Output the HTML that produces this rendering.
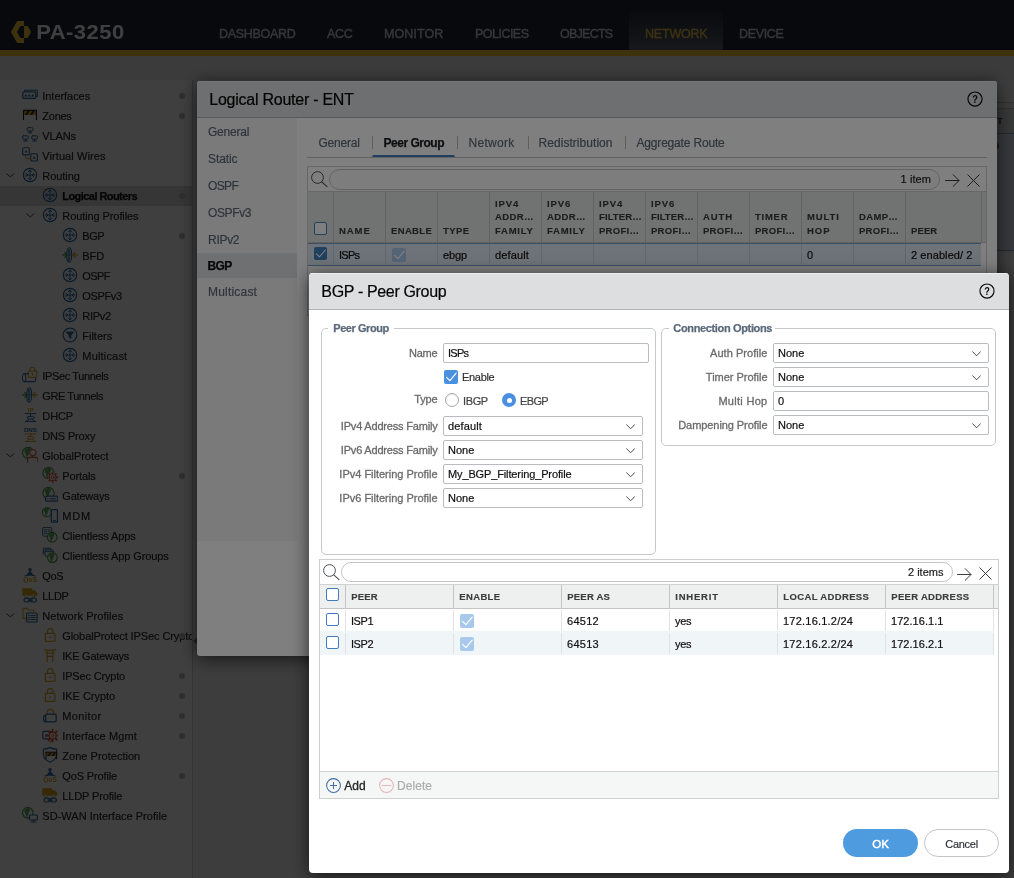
<!DOCTYPE html><html lang="en"><head><meta charset="utf-8"><title>PA-3250</title><style>
*{box-sizing:border-box;margin:0;padding:0}
html,body{width:1014px;height:878px;overflow:hidden;background:#f6f6f6}
body{font-family:"Liberation Sans",sans-serif;font-size:11px;color:#222;position:relative}
.abs,.abs>*{position:absolute}
#page{will-change:transform;position:absolute;left:0;top:0;width:1014px;height:878px;overflow:hidden}
.box{position:absolute}
.mask{position:absolute;left:0;top:0;width:1014px;height:878px;background:rgba(0,0,0,.5)}
svg{display:block}
.ico{position:absolute;width:16px;height:16px}
.dot{position:absolute;width:6px;height:6px;border-radius:50%;background:#b8b8b8}
.cb{position:absolute;width:13px;height:13px;border:1.5px solid #3f7cc0;border-radius:2px;background:#fff}
.inp{position:absolute;height:20px;border:1px solid #b8bcc1;border-radius:2px;background:#fff}
.fs{position:absolute;border:1px solid #c6c9cc;border-radius:5px}
.colsep{position:absolute;width:1px;background:#c9c9c9}
</style></head><body><div id="page"><div class="box" style="left:0px;top:0px;width:1014px;height:50px;background:#1c2434"></div><div class="box" style="left:629px;top:0px;width:94px;height:50px;background:linear-gradient(#1c2434 15%,#5c616c 100%)"></div><div class="box" style="left:0px;top:50px;width:1014px;height:6px;background:#f5c832"></div><div class="box" style="left:0px;top:56px;width:1014px;height:24px;background:#ececec"></div><svg class="box" style="left:0;top:0" width="40" height="50" viewBox="0 0 40 50"><path d="M17.160 21H24.060V25.960H20.350L16.960 31.950 20.350 38.050H24.060V42.900H17.160L10.900 31.950z" fill="#f8c838"/><path d="M24.060 25.960H27.730L31.120 31.950 27.730 38.050H24.060z" fill="#f8c838"/></svg><span style="position:absolute;white-space:nowrap;left:36.2px;top:17px;font-size:22px;line-height:31px;letter-spacing:0.47px;color:#fff;font-weight:bold;transform:scaleY(.885);transform-origin:0 50%;">PA-3250</span><span style="position:absolute;white-space:nowrap;left:219px;top:25px;font-size:12.5px;line-height:18px;letter-spacing:-0.3px;color:#d6dae2;-webkit-text-stroke:0.35px;">DASHBOARD</span><span style="position:absolute;white-space:nowrap;left:327px;top:25px;font-size:12.5px;line-height:18px;letter-spacing:-0.3px;color:#d6dae2;-webkit-text-stroke:0.35px;">ACC</span><span style="position:absolute;white-space:nowrap;left:384px;top:25px;font-size:12.5px;line-height:18px;letter-spacing:0.1px;color:#d6dae2;-webkit-text-stroke:0.35px;">MONITOR</span><span style="position:absolute;white-space:nowrap;left:475px;top:25px;font-size:12.5px;line-height:18px;letter-spacing:-0.52px;color:#d6dae2;-webkit-text-stroke:0.35px;">POLICIES</span><span style="position:absolute;white-space:nowrap;left:560px;top:25px;font-size:12.5px;line-height:18px;letter-spacing:-0.74px;color:#d6dae2;-webkit-text-stroke:0.35px;">OBJECTS</span><span style="position:absolute;white-space:nowrap;left:645px;top:25px;font-size:12.5px;line-height:18px;letter-spacing:-0.2px;color:#f0c846;-webkit-text-stroke:0.35px;">NETWORK</span><span style="position:absolute;white-space:nowrap;left:739px;top:25px;font-size:12.5px;line-height:18px;letter-spacing:-0.34px;color:#d6dae2;-webkit-text-stroke:0.35px;">DEVICE</span><div class="box" style="left:0px;top:80px;width:193px;height:798px;background:#fff;border-right:1px solid #cdcdcd;overflow:hidden"><div class="ico" style="left:22px;top:7.3px"><svg width="16" height="16" viewBox="0 0 16 16" fill="none" stroke-linecap="round" stroke-linejoin="round"><path d="M2.5 4.5V3.2h12.8v6.3h-1.2" stroke="#2b6ca3" stroke-width="1"/><rect x="0.8" y="4.8" width="13" height="6.6" rx="1.3" stroke="#2b6ca3" stroke-width="1.2"/><path d="M2.6 9.6h2.6V8.4H4.6V7.6H3.2v.8H2.6zM6 9.6h2.6V8.4H8V7.6H6.6v.8H6zM9.4 9.6H12V8.4h-.6V7.6H10v.8h-.6z" fill="#2b6ca3"/></svg></div><span style="position:absolute;white-space:nowrap;left:42.3px;top:9px;font-size:11px;line-height:15px;letter-spacing:-0.05px;color:#2a2a2a;-webkit-text-stroke:0.2px;">Interfaces</span><div class="dot" style="left:179px;top:13px"></div><div class="ico" style="left:22px;top:27.3px"><svg width="16" height="16" viewBox="0 0 16 16" fill="none" stroke-linecap="round" stroke-linejoin="round"><rect x="1.5" y="3.6" width="13" height="4.4" fill="#d9a520"/><path d="M3 8l3-4.4h2L5 8zM8 8l3-4.4h2L10 8z" fill="#222"/><path d="M1.5 3.4v9.2M14.5 3.4v9.2M1.5 3.4h13" stroke="#222" stroke-width="1.1"/></svg></div><span style="position:absolute;white-space:nowrap;left:42.3px;top:29px;font-size:11px;line-height:15px;letter-spacing:-0.25px;color:#2a2a2a;-webkit-text-stroke:0.2px;">Zones</span><div class="dot" style="left:179px;top:33px"></div><div class="ico" style="left:22px;top:47.3px"><svg width="16" height="16" viewBox="0 0 16 16" fill="none" stroke-linecap="round" stroke-linejoin="round"><rect x="5.2" y="0.6" width="5.6" height="3.4" rx="1" stroke="#2b6ca3" stroke-width="1"/><path d="M8.0 4.0v1.6M6.2 5.8h3.6" stroke="#2b6ca3" stroke-width="1"/><rect x="0.6" y="8.8" width="5.6" height="3.4" rx="1" stroke="#2b6ca3" stroke-width="1"/><path d="M3.4 12.200000000000001v1.6M1.6 14.0h3.6" stroke="#2b6ca3" stroke-width="1"/><rect x="9.8" y="8.8" width="5.6" height="3.4" rx="1" stroke="#2b6ca3" stroke-width="1"/><path d="M12.600000000000001 12.200000000000001v1.6M10.8 14.0h3.6" stroke="#2b6ca3" stroke-width="1"/></svg></div><span style="position:absolute;white-space:nowrap;left:42.3px;top:49px;font-size:11px;line-height:15px;letter-spacing:-0.14px;color:#2a2a2a;-webkit-text-stroke:0.2px;">VLANs</span><div class="ico" style="left:22px;top:67.3px"><svg width="16" height="16" viewBox="0 0 16 16" fill="none" stroke-linecap="round" stroke-linejoin="round"><rect x="0.7" y="0.7" width="6.6" height="7.2" rx="1" stroke="#2b6ca3" stroke-width="1.1"/><rect x="8.8" y="6.8" width="6.6" height="7.2" rx="1" stroke="#2b6ca3" stroke-width="1.1"/><path d="M2.8 5.6h2.4V4.4h-.6v-.8H3.4v.8h-.6zM10.9 11.7h2.4v-1.2h-.6v-.8h-1.2v.8h-.6z" fill="#2b6ca3"/><path d="M3.6 8.2v1.6q0 1.8 1.8 1.8h3" stroke="#d9a520" stroke-width="1.1"/></svg></div><span style="position:absolute;white-space:nowrap;left:42.3px;top:69px;font-size:11px;line-height:15px;letter-spacing:0.08px;color:#2a2a2a;-webkit-text-stroke:0.2px;">Virtual Wires</span><div class="ico" style="left:22px;top:87.3px"><svg width="16" height="16" viewBox="0 0 16 16" fill="none" stroke-linecap="round" stroke-linejoin="round"><circle cx="8" cy="8" r="6.700" stroke="#2b6ca3" stroke-width="1.150"/><path d="M8 3v10M3 8h10" stroke="#2b6ca3" stroke-width="1"/><path d="M6.4 4.8L8 3l1.6 1.8M6.4 11.2L8 13l1.6-1.8M4.2 6.4L6 8 4.2 9.6M11.8 6.4L10 8l1.8 1.6" stroke="#2b6ca3" stroke-width="1"/></svg></div><span style="position:absolute;white-space:nowrap;left:42.3px;top:89px;font-size:11px;line-height:15px;letter-spacing:-0.05px;color:#2a2a2a;-webkit-text-stroke:0.2px;">Routing</span><div class="box" style="left:6.2px;top:93.3px"><svg width="8.6" height="4.8" viewBox="0 0 8.6 4.8" fill="none"><path d="M0.600 0.700L4.3 4l3.7-3.3" stroke="#333" stroke-width="0.9" stroke-linecap="round" stroke-linejoin="round"/></svg></div><div class="box" style="left:0px;top:106px;width:193px;height:20px;background:#d9d9d9"></div><div class="ico" style="left:42px;top:107.3px"><svg width="16" height="16" viewBox="0 0 16 16" fill="none" stroke-linecap="round" stroke-linejoin="round"><circle cx="8" cy="8" r="6.700" stroke="#2b6ca3" stroke-width="1.150"/><path d="M8 3v10M3 8h10" stroke="#2b6ca3" stroke-width="1"/><path d="M6.4 4.8L8 3l1.6 1.8M6.4 11.2L8 13l1.6-1.8M4.2 6.4L6 8 4.2 9.6M11.8 6.4L10 8l1.8 1.6" stroke="#2b6ca3" stroke-width="1"/></svg></div><span style="position:absolute;white-space:nowrap;left:62.3px;top:109px;font-size:11px;line-height:15px;letter-spacing:-0.56px;color:#111;font-weight:bold;-webkit-text-stroke:0.25px;">Logical Routers</span><div class="dot" style="left:179px;top:113px"></div><div class="ico" style="left:42px;top:127.3px"><svg width="16" height="16" viewBox="0 0 16 16" fill="none" stroke-linecap="round" stroke-linejoin="round"><circle cx="8" cy="8" r="6.700" stroke="#2b6ca3" stroke-width="1.150"/><path d="M8 3v10M3 8h10" stroke="#2b6ca3" stroke-width="1"/><path d="M6.4 4.8L8 3l1.6 1.8M6.4 11.2L8 13l1.6-1.8M4.2 6.4L6 8 4.2 9.6M11.8 6.4L10 8l1.8 1.6" stroke="#2b6ca3" stroke-width="1"/></svg></div><span style="position:absolute;white-space:nowrap;left:62.3px;top:129px;font-size:11px;line-height:15px;letter-spacing:-0.09px;color:#2a2a2a;-webkit-text-stroke:0.2px;">Routing Profiles</span><div class="box" style="left:26.2px;top:133.3px"><svg width="8.6" height="4.8" viewBox="0 0 8.6 4.8" fill="none"><path d="M0.600 0.700L4.3 4l3.7-3.3" stroke="#333" stroke-width="0.9" stroke-linecap="round" stroke-linejoin="round"/></svg></div><div class="ico" style="left:62px;top:147.3px"><svg width="16" height="16" viewBox="0 0 16 16" fill="none" stroke-linecap="round" stroke-linejoin="round"><circle cx="8" cy="8" r="6.700" stroke="#2b6ca3" stroke-width="1.150"/><path d="M8 3v10M3 8h10" stroke="#2b6ca3" stroke-width="1"/><path d="M6.4 4.8L8 3l1.6 1.8M6.4 11.2L8 13l1.6-1.8M4.2 6.4L6 8 4.2 9.6M11.8 6.4L10 8l1.8 1.6" stroke="#2b6ca3" stroke-width="1"/></svg></div><span style="position:absolute;white-space:nowrap;left:82.3px;top:149px;font-size:11px;line-height:15px;letter-spacing:-0.49px;color:#2a2a2a;-webkit-text-stroke:0.2px;">BGP</span><div class="dot" style="left:179px;top:153px"></div><div class="ico" style="left:62px;top:167.3px"><svg width="16" height="16" viewBox="0 0 16 16" fill="none" stroke-linecap="round" stroke-linejoin="round"><ellipse cx="7.200" cy="7.900" rx="2.500" ry="7.200" stroke="#2b6ca3" stroke-width="1.100"/><ellipse cx="7" cy="7.900" rx="0.900" ry="5.600" stroke="#2b6ca3" stroke-width="0.900"/><path d="M0.300 7.900h4.600M2.800 5.400l2.300 2.500-2.300 2.500" stroke="#3c9a3c" stroke-width="1.100"/><path d="M15.700 7.900h-4.600M13.200 5.400l-2.300 2.500 2.300 2.500" stroke="#d9a520" stroke-width="1.100"/></svg></div><span style="position:absolute;white-space:nowrap;left:82.3px;top:169px;font-size:11px;line-height:15px;letter-spacing:-0.1px;color:#2a2a2a;-webkit-text-stroke:0.2px;">BFD</span><div class="ico" style="left:62px;top:187.3px"><svg width="16" height="16" viewBox="0 0 16 16" fill="none" stroke-linecap="round" stroke-linejoin="round"><circle cx="8" cy="8" r="6.700" stroke="#2b6ca3" stroke-width="1.150"/><path d="M8 3v10M3 8h10" stroke="#2b6ca3" stroke-width="1"/><path d="M6.4 4.8L8 3l1.6 1.8M6.4 11.2L8 13l1.6-1.8M4.2 6.4L6 8 4.2 9.6M11.8 6.4L10 8l1.8 1.6" stroke="#2b6ca3" stroke-width="1"/></svg></div><span style="position:absolute;white-space:nowrap;left:82.3px;top:189px;font-size:11px;line-height:15px;letter-spacing:-0.59px;color:#2a2a2a;-webkit-text-stroke:0.2px;">OSPF</span><div class="ico" style="left:62px;top:207.3px"><svg width="16" height="16" viewBox="0 0 16 16" fill="none" stroke-linecap="round" stroke-linejoin="round"><circle cx="8" cy="8" r="6.700" stroke="#2b6ca3" stroke-width="1.150"/><path d="M8 3v10M3 8h10" stroke="#2b6ca3" stroke-width="1"/><path d="M6.4 4.8L8 3l1.6 1.8M6.4 11.2L8 13l1.6-1.8M4.2 6.4L6 8 4.2 9.6M11.8 6.4L10 8l1.8 1.6" stroke="#2b6ca3" stroke-width="1"/></svg></div><span style="position:absolute;white-space:nowrap;left:82.3px;top:209px;font-size:11px;line-height:15px;letter-spacing:-0.35px;color:#2a2a2a;-webkit-text-stroke:0.2px;">OSPFv3</span><div class="ico" style="left:62px;top:227.3px"><svg width="16" height="16" viewBox="0 0 16 16" fill="none" stroke-linecap="round" stroke-linejoin="round"><circle cx="8" cy="8" r="6.700" stroke="#2b6ca3" stroke-width="1.150"/><path d="M8 3v10M3 8h10" stroke="#2b6ca3" stroke-width="1"/><path d="M6.4 4.8L8 3l1.6 1.8M6.4 11.2L8 13l1.6-1.8M4.2 6.4L6 8 4.2 9.6M11.8 6.4L10 8l1.8 1.6" stroke="#2b6ca3" stroke-width="1"/></svg></div><span style="position:absolute;white-space:nowrap;left:82.3px;top:229px;font-size:11px;line-height:15px;letter-spacing:-0.26px;color:#2a2a2a;-webkit-text-stroke:0.2px;">RIPv2</span><div class="ico" style="left:62px;top:247.3px"><svg width="16" height="16" viewBox="0 0 16 16" fill="none" stroke-linecap="round" stroke-linejoin="round"><circle cx="8" cy="8" r="6.9" stroke="#2b6ca3" stroke-width="1.2"/><path d="M4.4 5h7.2L9 8.4v3L7 10.4v-2z" fill="#2b6ca3" stroke="#2b6ca3" stroke-width="0.8"/></svg></div><span style="position:absolute;white-space:nowrap;left:82.3px;top:249px;font-size:11px;line-height:15px;letter-spacing:-0.01px;color:#2a2a2a;-webkit-text-stroke:0.2px;">Filters</span><div class="ico" style="left:62px;top:267.3px"><svg width="16" height="16" viewBox="0 0 16 16" fill="none" stroke-linecap="round" stroke-linejoin="round"><circle cx="8" cy="8" r="6.700" stroke="#2b6ca3" stroke-width="1.150"/><path d="M8 3v10M3 8h10" stroke="#2b6ca3" stroke-width="1"/><path d="M6.4 4.8L8 3l1.6 1.8M6.4 11.2L8 13l1.6-1.8M4.2 6.4L6 8 4.2 9.6M11.8 6.4L10 8l1.8 1.6" stroke="#2b6ca3" stroke-width="1"/></svg></div><span style="position:absolute;white-space:nowrap;left:82.3px;top:269px;font-size:11px;line-height:15px;letter-spacing:0.18px;color:#2a2a2a;-webkit-text-stroke:0.2px;">Multicast</span><div class="ico" style="left:22px;top:287.3px"><svg width="16" height="16" viewBox="0 0 16 16" fill="none" stroke-linecap="round" stroke-linejoin="round"><rect x="6.400" y="4" width="8.400" height="6.400" rx="0.900" stroke="#d9a520" stroke-width="1.100"/><path d="M7.900 4V2.800a2.500 2.500 0 015 0V4" stroke="#d9a520" stroke-width="1.100"/><circle cx="10.500" cy="6.600" r="0.900" fill="#d9a520"/><path d="M10.500 6.800v1.600" stroke="#d9a520" stroke-width="0.900"/><ellipse cx="2.100" cy="10.700" rx="1.700" ry="3.900" stroke="#2b6ca3" stroke-width="1.050"/><path d="M2.100 6.800h4.200M2.100 14.600h10q1.600 0 1.600-1.800v-2.200" stroke="#2b6ca3" stroke-width="1.050"/></svg></div><span style="position:absolute;white-space:nowrap;left:42.3px;top:289px;font-size:11px;line-height:15px;letter-spacing:-0.37px;color:#2a2a2a;-webkit-text-stroke:0.2px;">IPSec Tunnels</span><div class="ico" style="left:22px;top:307.3px"><svg width="16" height="16" viewBox="0 0 16 16" fill="none" stroke-linecap="round" stroke-linejoin="round"><ellipse cx="7.200" cy="7.900" rx="2.500" ry="7.200" stroke="#2b6ca3" stroke-width="1.100"/><ellipse cx="7" cy="7.900" rx="0.900" ry="5.600" stroke="#2b6ca3" stroke-width="0.900"/><path d="M0.300 7.900h4.600M2.800 5.400l2.300 2.500-2.300 2.500" stroke="#3c9a3c" stroke-width="1.100"/><path d="M15.700 7.900h-4.600M13.200 5.400l-2.300 2.500 2.300 2.500" stroke="#d9a520" stroke-width="1.100"/></svg></div><span style="position:absolute;white-space:nowrap;left:42.3px;top:309px;font-size:11px;line-height:15px;letter-spacing:-0.43px;color:#2a2a2a;-webkit-text-stroke:0.2px;">GRE Tunnels</span><div class="ico" style="left:22px;top:327.3px"><svg width="16" height="16" viewBox="0 0 16 16" fill="none" stroke-linecap="round" stroke-linejoin="round"><text x="8.700" y="5" font-family="Liberation Sans, sans-serif" font-size="6.200" font-weight="bold" fill="#d9a520" text-anchor="middle">IP</text><path d="M3.200 6.600h10.600M8.500 6.600v2.800M3.200 14.400h10.600M6.800 12.100q-.4 2.200-2.600 2.300M10.400 12.100q.4 2.200 2.600 2.300" stroke="#2b6ca3" stroke-width="1"/><rect x="5.300" y="9.400" width="6.800" height="2.700" rx="1.350" stroke="#2b6ca3" stroke-width="1"/></svg></div><span style="position:absolute;white-space:nowrap;left:42.3px;top:329px;font-size:11px;line-height:15px;letter-spacing:-0.11px;color:#2a2a2a;-webkit-text-stroke:0.2px;">DHCP</span><div class="ico" style="left:22px;top:347.3px"><svg width="16" height="16" viewBox="0 0 16 16" fill="none" stroke-linecap="round" stroke-linejoin="round"><text x="8.400" y="5.200" font-family="Liberation Sans, sans-serif" font-size="6" font-weight="bold" fill="#2b6ca3" text-anchor="middle" textLength="13" lengthAdjust="spacingAndGlyphs">DNS</text><path d="M3.200 6.900h10.600M8.500 6.900v2.500M3.200 14.500h10.600M6.800 12.100q-.4 2.200-2.600 2.400M10.400 12.100q.4 2.200 2.600 2.400" stroke="#d9a520" stroke-width="1"/><rect x="5.300" y="9.400" width="6.800" height="2.700" rx="1.350" stroke="#d9a520" stroke-width="1"/></svg></div><span style="position:absolute;white-space:nowrap;left:42.3px;top:349px;font-size:11px;line-height:15px;letter-spacing:-0.16px;color:#2a2a2a;-webkit-text-stroke:0.2px;">DNS Proxy</span><div class="ico" style="left:22px;top:367.3px"><svg width="16" height="16" viewBox="0 0 16 16" fill="none" stroke-linecap="round" stroke-linejoin="round"><circle cx="6.1" cy="5.9" r="5.5" stroke="#3c9a3c" stroke-width="1.100"/><path d="M2.69 2.875q2.475 -2.75 5.225 -1.65q1.65 1.925 -0.275 3.3q-1.1 0.55 -0.55 2.475q-1.375 1.65 -1.925 4.125q-1.65 -2.75 -1.65 -4.95q-1.65 -1.1 -0.825 -3.3z" fill="#3c9a3c" fill-opacity=".8"/><circle cx="10.900" cy="5.600" r="3.100" stroke="#d9573b" stroke-width="1.100" fill="#fff"/><path d="M5.600 15.300v-2.600q0-2.300 2.400-2.300h5.600q2.400 0 2.400 2.300v2.600" stroke="#d9573b" stroke-width="1.100" fill="#fff"/></svg></div><span style="position:absolute;white-space:nowrap;left:42.3px;top:369px;font-size:11px;line-height:15px;letter-spacing:-0.03px;color:#2a2a2a;-webkit-text-stroke:0.2px;">GlobalProtect</span><div class="box" style="left:6.2px;top:373.3px"><svg width="8.6" height="4.8" viewBox="0 0 8.6 4.8" fill="none"><path d="M0.600 0.700L4.3 4l3.7-3.3" stroke="#333" stroke-width="0.9" stroke-linecap="round" stroke-linejoin="round"/></svg></div><div class="ico" style="left:42px;top:387.3px"><svg width="16" height="16" viewBox="0 0 16 16" fill="none" stroke-linecap="round" stroke-linejoin="round"><circle cx="6.5" cy="6.1" r="5.6" stroke="#3c9a3c" stroke-width="1.100"/><path d="M3.028 3.02q2.52 -2.8 5.32 -1.68q1.68 1.96 -0.28 3.36q-1.12 0.56 -0.56 2.52q-1.4 1.68 -1.96 4.2q-1.68 -2.8 -1.68 -5.04q-1.68 -1.12 -0.84 -3.36z" fill="#3c9a3c" fill-opacity=".8"/><circle cx="10.600" cy="10.300" r="5.200" fill="#fff"/><path d="M10.600 4.800v1.500" stroke="#d9573b" stroke-width="1.700" stroke-linecap="butt" transform="rotate(0 10.600 10.300)"/><path d="M10.600 4.800v1.500" stroke="#d9573b" stroke-width="1.700" stroke-linecap="butt" transform="rotate(45 10.600 10.300)"/><path d="M10.600 4.800v1.500" stroke="#d9573b" stroke-width="1.700" stroke-linecap="butt" transform="rotate(90 10.600 10.300)"/><path d="M10.600 4.800v1.500" stroke="#d9573b" stroke-width="1.700" stroke-linecap="butt" transform="rotate(135 10.600 10.300)"/><path d="M10.600 4.800v1.500" stroke="#d9573b" stroke-width="1.700" stroke-linecap="butt" transform="rotate(180 10.600 10.300)"/><path d="M10.600 4.800v1.500" stroke="#d9573b" stroke-width="1.700" stroke-linecap="butt" transform="rotate(225 10.600 10.300)"/><path d="M10.600 4.800v1.500" stroke="#d9573b" stroke-width="1.700" stroke-linecap="butt" transform="rotate(270 10.600 10.300)"/><path d="M10.600 4.800v1.500" stroke="#d9573b" stroke-width="1.700" stroke-linecap="butt" transform="rotate(315 10.600 10.300)"/><circle cx="10.600" cy="10.300" r="3.500" stroke="#d9573b" stroke-width="1.100" fill="#fff"/><circle cx="10.600" cy="10.300" r="1.500" stroke="#d9573b" stroke-width="1"/></svg></div><span style="position:absolute;white-space:nowrap;left:62.3px;top:389px;font-size:11px;line-height:15px;letter-spacing:-0.13px;color:#2a2a2a;-webkit-text-stroke:0.2px;">Portals</span><div class="dot" style="left:179px;top:393px"></div><div class="ico" style="left:42px;top:407.3px"><svg width="16" height="16" viewBox="0 0 16 16" fill="none" stroke-linecap="round" stroke-linejoin="round"><circle cx="6.5" cy="6.1" r="5.6" stroke="#3c9a3c" stroke-width="1.100"/><path d="M3.028 3.02q2.52 -2.8 5.32 -1.68q1.68 1.96 -0.28 3.36q-1.12 0.56 -0.56 2.52q-1.4 1.68 -1.96 4.2q-1.68 -2.8 -1.68 -5.04q-1.68 -1.12 -0.84 -3.36z" fill="#3c9a3c" fill-opacity=".8"/><rect x="3.600" y="9.200" width="12.200" height="5" rx="1.200" stroke="#2b6ca3" stroke-width="1.200" fill="#fff"/><path d="M8 11.700h5.600" stroke="#2b6ca3" stroke-width="1.100"/><circle cx="5.900" cy="11.700" r="0.700" fill="#2b6ca3"/></svg></div><span style="position:absolute;white-space:nowrap;left:62.3px;top:409px;font-size:11px;line-height:15px;letter-spacing:-0.2px;color:#2a2a2a;-webkit-text-stroke:0.2px;">Gateways</span><div class="ico" style="left:42px;top:427.3px"><svg width="16" height="16" viewBox="0 0 16 16" fill="none" stroke-linecap="round" stroke-linejoin="round"><circle cx="5" cy="5.2" r="4.6" stroke="#3c9a3c" stroke-width="1.100"/><path d="M2.148 2.67q2.07 -2.3 4.37 -1.38q1.38 1.61 -0.23 2.76q-0.92 0.46 -0.46 2.07q-1.15 1.38 -1.61 3.45q-1.38 -2.3 -1.38 -4.14q-1.38 -0.92 -0.69 -2.76z" fill="#3c9a3c" fill-opacity=".8"/><rect x="9.300" y="2.600" width="6.200" height="12.600" rx="1.200" stroke="#2b6ca3" stroke-width="1.300" fill="#fff"/><path d="M11.400 13.500h2" stroke="#2b6ca3" stroke-width="0.900"/></svg></div><span style="position:absolute;white-space:nowrap;left:62.3px;top:429px;font-size:11px;line-height:15px;letter-spacing:0.84px;color:#2a2a2a;-webkit-text-stroke:0.2px;">MDM</span><div class="ico" style="left:42px;top:447.3px"><svg width="16" height="16" viewBox="0 0 16 16" fill="none" stroke-linecap="round" stroke-linejoin="round"><rect x="0.600" y="0.600" width="9.200" height="8.600" rx=".8" stroke="#2b6ca3" stroke-width="1"/><path d="M2.200 2.900h2.400M5.800 2.900h2.400M2.200 4.800h2.400M5.800 4.800h2.400M2.200 6.700h2.400M5.800 6.700h2.400" stroke="#2b6ca3" stroke-width=".9"/><circle cx="10.200" cy="10.200" r="5.300" fill="#fff"/><circle cx="10.2" cy="10.2" r="4.8" stroke="#3c9a3c" stroke-width="1.100"/><path d="M7.224 7.56q2.16 -2.4 4.56 -1.44q1.44 1.68 -0.24 2.88q-0.96 0.48 -0.48 2.16q-1.2 1.44 -1.68 3.6q-1.44 -2.4 -1.44 -4.32q-1.44 -0.96 -0.72 -2.88z" fill="#3c9a3c" fill-opacity=".8"/></svg></div><span style="position:absolute;white-space:nowrap;left:62.3px;top:449px;font-size:11px;line-height:15px;letter-spacing:-0.13px;color:#2a2a2a;-webkit-text-stroke:0.2px;">Clientless Apps</span><div class="ico" style="left:42px;top:467.3px"><svg width="16" height="16" viewBox="0 0 16 16" fill="none" stroke-linecap="round" stroke-linejoin="round"><path d="M1.300 7V1.200h7.400v1.600" stroke="#2b6ca3" stroke-width="1"/><rect x="3" y="2.800" width="8.200" height="6.400" rx=".8" stroke="#2b6ca3" stroke-width="1"/><path d="M3 4.600h8.200" stroke="#2b6ca3" stroke-width=".9"/><circle cx="10.400" cy="10.600" r="5.300" fill="#fff"/><circle cx="10.4" cy="10.6" r="4.8" stroke="#3c9a3c" stroke-width="1.100"/><path d="M7.424 7.96q2.16 -2.4 4.56 -1.44q1.44 1.68 -0.24 2.88q-0.96 0.48 -0.48 2.16q-1.2 1.44 -1.68 3.6q-1.44 -2.4 -1.44 -4.32q-1.44 -0.96 -0.72 -2.88z" fill="#3c9a3c" fill-opacity=".8"/></svg></div><span style="position:absolute;white-space:nowrap;left:62.3px;top:469px;font-size:11px;line-height:15px;letter-spacing:-0.12px;color:#2a2a2a;-webkit-text-stroke:0.2px;">Clientless App Groups</span><div class="ico" style="left:22px;top:487.3px"><svg width="16" height="16" viewBox="0 0 16 16" fill="none" stroke-linecap="round" stroke-linejoin="round"><circle cx="8" cy="2.6" r="1.7" fill="#2b6ca3"/><path d="M8 3.6L4.2 8.6h7.6z" fill="#2b6ca3"/><path d="M3 8.8q5-2.4 10 0" stroke="#2b6ca3" stroke-width="1"/><text x="8" y="15.2" font-family="Liberation Sans, sans-serif" font-size="6.6" font-weight="bold" fill="#d9a520" text-anchor="middle">QoS</text></svg></div><span style="position:absolute;white-space:nowrap;left:42.3px;top:489px;font-size:11px;line-height:15px;letter-spacing:-0.41px;color:#2a2a2a;-webkit-text-stroke:0.2px;">QoS</span><div class="ico" style="left:22px;top:507.3px"><svg width="16" height="16" viewBox="0 0 16 16" fill="none" stroke-linecap="round" stroke-linejoin="round"><path d="M1 1.6h8.4v6.6H1zM9.4 3.4h3l2.6 2.6v2.2H9.4z" fill="#d9a520" stroke="#d9a520" stroke-width=".8"/><circle cx="4" cy="8.6" r="1.5" fill="#fff" stroke="#d9a520" stroke-width="1"/><circle cx="11.6" cy="8.6" r="1.5" fill="#fff" stroke="#d9a520" stroke-width="1"/><rect x="2" y="11.2" width="6" height="3.8" rx="1.9" stroke="#2b6ca3" stroke-width="1.2"/><rect x="8.4" y="11.2" width="6" height="3.8" rx="1.9" stroke="#2b6ca3" stroke-width="1.2"/><path d="M6 13.1h4.4" stroke="#2b6ca3" stroke-width="1.2"/></svg></div><span style="position:absolute;white-space:nowrap;left:42.3px;top:509px;font-size:11px;line-height:15px;letter-spacing:-0.31px;color:#2a2a2a;-webkit-text-stroke:0.2px;">LLDP</span><div class="ico" style="left:22px;top:527.3px"><svg width="16" height="16" viewBox="0 0 16 16" fill="none" stroke-linecap="round" stroke-linejoin="round"><path d="M3.4 11.4H1V1.4h4l1.2 1.6h5.4v2" stroke="#d9a520" stroke-width="1.1"/><rect x="4.6" y="6" width="10.4" height="9" rx="1" stroke="#2b6ca3" stroke-width="1.2" fill="#fff"/><path d="M6.4 8.6h1M8.8 8.6h4.4M6.4 10.6h1M8.8 10.6h4.4M6.4 12.6h1M8.8 12.6h4.4" stroke="#2b6ca3" stroke-width="1"/></svg></div><span style="position:absolute;white-space:nowrap;left:42.3px;top:529px;font-size:11px;line-height:15px;letter-spacing:0.06px;color:#2a2a2a;-webkit-text-stroke:0.2px;">Network Profiles</span><div class="box" style="left:6.2px;top:533.3px"><svg width="8.6" height="4.8" viewBox="0 0 8.6 4.8" fill="none"><path d="M0.600 0.700L4.3 4l3.7-3.3" stroke="#333" stroke-width="0.9" stroke-linecap="round" stroke-linejoin="round"/></svg></div><div class="ico" style="left:42px;top:547.3px"><svg width="16" height="16" viewBox="0 0 16 16" fill="none" stroke-linecap="round" stroke-linejoin="round"><rect x="3.4" y="6.4" width="9.6" height="8" rx="1" stroke="#d9a520" stroke-width="1.2"/><path d="M5.4 6.4V4.4a2.8 2.8 0 015.6 0v2" stroke="#d9a520" stroke-width="1.2"/><circle cx="8.2" cy="10.2" r="1" fill="#d9a520"/></svg></div><span style="position:absolute;white-space:nowrap;left:62.3px;top:549px;font-size:11px;line-height:15px;letter-spacing:-0.1px;color:#2a2a2a;-webkit-text-stroke:0.2px;">GlobalProtect IPSec Crypto</span><div class="dot" style="left:179px;top:553px"></div><div class="ico" style="left:42px;top:567.3px"><svg width="16" height="16" viewBox="0 0 16 16" fill="none" stroke-linecap="round" stroke-linejoin="round"><path d="M2.4 2.6q5.6 1.4 11.2 0M3.6 6h8.8M5.2 3.4v11.4M10.8 3.4v11.4M5.2 9.4h5.6" stroke="#d9a520" stroke-width="1.2"/></svg></div><span style="position:absolute;white-space:nowrap;left:62.3px;top:569px;font-size:11px;line-height:15px;letter-spacing:-0.24px;color:#2a2a2a;-webkit-text-stroke:0.2px;">IKE Gateways</span><div class="ico" style="left:42px;top:587.3px"><svg width="16" height="16" viewBox="0 0 16 16" fill="none" stroke-linecap="round" stroke-linejoin="round"><rect x="3.4" y="6.4" width="9.6" height="8" rx="1" stroke="#d9a520" stroke-width="1.2"/><path d="M5.4 6.4V4.4a2.8 2.8 0 015.6 0v2" stroke="#d9a520" stroke-width="1.2"/><circle cx="8.2" cy="10.2" r="1" fill="#d9a520"/></svg></div><span style="position:absolute;white-space:nowrap;left:62.3px;top:589px;font-size:11px;line-height:15px;letter-spacing:-0.17px;color:#2a2a2a;-webkit-text-stroke:0.2px;">IPSec Crypto</span><div class="dot" style="left:179px;top:593px"></div><div class="ico" style="left:42px;top:607.3px"><svg width="16" height="16" viewBox="0 0 16 16" fill="none" stroke-linecap="round" stroke-linejoin="round"><rect x="3.4" y="6.4" width="9.6" height="8" rx="1" stroke="#d9a520" stroke-width="1.2"/><path d="M5.4 6.4V4.4a2.8 2.8 0 015.6 0v2" stroke="#d9a520" stroke-width="1.2"/><circle cx="8.2" cy="10.2" r="1" fill="#d9a520"/></svg></div><span style="position:absolute;white-space:nowrap;left:62.3px;top:609px;font-size:11px;line-height:15px;letter-spacing:-0.04px;color:#2a2a2a;-webkit-text-stroke:0.2px;">IKE Crypto</span><div class="dot" style="left:179px;top:613px"></div><div class="ico" style="left:42px;top:627.3px"><svg width="16" height="16" viewBox="0 0 16 16" fill="none" stroke-linecap="round" stroke-linejoin="round"><path d="M5.2 7.2V5.6a3.2 3.2 0 016.4 0v1.6" stroke="#d9a520" stroke-width="1.1"/><rect x="3.6" y="7.2" width="10.6" height="7.6" rx="1.6" stroke="#2b6ca3" stroke-width="1.2"/><path d="M3.6 8.4q-2 0-2 2.2v2q0 2.2 2 2.2" stroke="#2b6ca3" stroke-width="1.2"/></svg></div><span style="position:absolute;white-space:nowrap;left:62.3px;top:629px;font-size:11px;line-height:15px;letter-spacing:0.36px;color:#2a2a2a;-webkit-text-stroke:0.2px;">Monitor</span><div class="dot" style="left:179px;top:633px"></div><div class="ico" style="left:42px;top:647.3px"><svg width="16" height="16" viewBox="0 0 16 16" fill="none" stroke-linecap="round" stroke-linejoin="round"><rect x="0.8" y="4.4" width="9" height="7.4" rx="1" stroke="#2b6ca3" stroke-width="1.2"/><path d="M3 9.6h3.6V8.2h-.8V7.2H3.8v1H3z" fill="#2b6ca3"/><path d="M10.6 2.6v1.6" stroke="#d9573b" stroke-width="1.8" transform="rotate(0 10.6 8.6)"/><path d="M10.6 2.6v1.6" stroke="#d9573b" stroke-width="1.8" transform="rotate(45 10.6 8.6)"/><path d="M10.6 2.6v1.6" stroke="#d9573b" stroke-width="1.8" transform="rotate(90 10.6 8.6)"/><path d="M10.6 2.6v1.6" stroke="#d9573b" stroke-width="1.8" transform="rotate(135 10.6 8.6)"/><path d="M10.6 2.6v1.6" stroke="#d9573b" stroke-width="1.8" transform="rotate(180 10.6 8.6)"/><path d="M10.6 2.6v1.6" stroke="#d9573b" stroke-width="1.8" transform="rotate(225 10.6 8.6)"/><path d="M10.6 2.6v1.6" stroke="#d9573b" stroke-width="1.8" transform="rotate(270 10.6 8.6)"/><path d="M10.6 2.6v1.6" stroke="#d9573b" stroke-width="1.8" transform="rotate(315 10.6 8.6)"/><circle cx="10.6" cy="8.6" r="3.6" stroke="#d9573b" stroke-width="1.3" fill="#fff"/><circle cx="10.6" cy="8.6" r="1.2" stroke="#d9573b" stroke-width="1"/><circle cx="8.4" cy="13.4" r="1.6" stroke="#d9573b" stroke-width="1"/></svg></div><span style="position:absolute;white-space:nowrap;left:62.3px;top:649px;font-size:11px;line-height:15px;letter-spacing:0.08px;color:#2a2a2a;-webkit-text-stroke:0.2px;">Interface Mgmt</span><div class="dot" style="left:179px;top:653px"></div><div class="ico" style="left:42px;top:667.3px"><svg width="16" height="16" viewBox="0 0 16 16" fill="none" stroke-linecap="round" stroke-linejoin="round"><path d="M1.4 2.2q3.4-.2 6.6-1.6 3.2 1.4 6.6 1.6v5.6q0 4.600-6.600 7.400-6.600-2.800-6.600-7.400z" stroke="#2b6ca3" stroke-width="1.2"/><rect x="4" y="5.4" width="10.600" height="3.600" fill="#d9a520"/><path d="M5.4 9l2.4-3.600h1.800L7.200 9zM9.800 9l2.400-3.600h1.800L11.600 9z" fill="#222"/><path d="M4 5.200v6.600M14.600 5.200v6.600M4 5.200h10.600" stroke="#222" stroke-width="1"/></svg></div><span style="position:absolute;white-space:nowrap;left:62.3px;top:669px;font-size:11px;line-height:15px;letter-spacing:0.02px;color:#2a2a2a;-webkit-text-stroke:0.2px;">Zone Protection</span><div class="ico" style="left:42px;top:687.3px"><svg width="16" height="16" viewBox="0 0 16 16" fill="none" stroke-linecap="round" stroke-linejoin="round"><circle cx="8" cy="2.6" r="1.7" fill="#2b6ca3"/><path d="M8 3.6L4.2 8.6h7.6z" fill="#2b6ca3"/><path d="M3 8.8q5-2.4 10 0" stroke="#2b6ca3" stroke-width="1"/><text x="8" y="15.2" font-family="Liberation Sans, sans-serif" font-size="6.6" font-weight="bold" fill="#d9a520" text-anchor="middle">QoS</text></svg></div><span style="position:absolute;white-space:nowrap;left:62.3px;top:689px;font-size:11px;line-height:15px;letter-spacing:-0.14px;color:#2a2a2a;-webkit-text-stroke:0.2px;">QoS Profile</span><div class="dot" style="left:179px;top:693px"></div><div class="ico" style="left:42px;top:707.3px"><svg width="16" height="16" viewBox="0 0 16 16" fill="none" stroke-linecap="round" stroke-linejoin="round"><path d="M1 1.6h8.4v6.6H1zM9.4 3.4h3l2.6 2.6v2.2H9.4z" fill="#d9a520" stroke="#d9a520" stroke-width=".8"/><circle cx="4" cy="8.6" r="1.5" fill="#fff" stroke="#d9a520" stroke-width="1"/><circle cx="11.6" cy="8.6" r="1.5" fill="#fff" stroke="#d9a520" stroke-width="1"/><rect x="2" y="11.2" width="6" height="3.8" rx="1.9" stroke="#2b6ca3" stroke-width="1.2"/><rect x="8.4" y="11.2" width="6" height="3.8" rx="1.9" stroke="#2b6ca3" stroke-width="1.2"/><path d="M6 13.1h4.4" stroke="#2b6ca3" stroke-width="1.2"/></svg></div><span style="position:absolute;white-space:nowrap;left:62.3px;top:709px;font-size:11px;line-height:15px;letter-spacing:-0.14px;color:#2a2a2a;-webkit-text-stroke:0.2px;">LLDP Profile</span><div class="ico" style="left:22px;top:727.3px"><svg width="16" height="16" viewBox="0 0 16 16" fill="none" stroke-linecap="round" stroke-linejoin="round"><circle cx="5.8" cy="5.8" r="5.3" stroke="#3c9a3c" stroke-width="1.100"/><path d="M2.514 2.885q2.385 -2.65 5.035 -1.59q1.59 1.855 -0.265 3.18q-1.06 0.53 -0.53 2.385q-1.325 1.59 -1.855 3.975q-1.59 -2.65 -1.59 -4.77q-1.59 -1.06 -0.795 -3.18z" fill="#3c9a3c" fill-opacity=".8"/><rect x="7.400" y="8" width="8" height="5" rx="1" stroke="#2b6ca3" stroke-width="1.200" fill="#fff"/><path d="M11.400 13v1.600M9 15h4.800" stroke="#2b6ca3" stroke-width="1.100"/></svg></div><span style="position:absolute;white-space:nowrap;left:42.3px;top:729px;font-size:11px;line-height:15px;letter-spacing:0.02px;color:#2a2a2a;-webkit-text-stroke:0.2px;">SD-WAN Interface Profile</span></div><svg class="box" style="left:193px;top:637px" width="4" height="8" viewBox="0 0 4 8"><path d="M3.600 0.500v7L0.400 4z" fill="#777"/></svg><div class="box" style="left:997px;top:102px;width:17px;height:7px;background:#f1f1f1;border-top:1px solid #c6c6c6;border-bottom:1px solid #c6c6c6"></div><div class="box" style="left:997px;top:109px;width:17px;height:24px;background:#e2e4e6"></div><span style="position:absolute;white-space:nowrap;left:997px;top:114px;font-size:9.5px;line-height:13px;letter-spacing:-0.1px;color:#444;font-weight:bold;-webkit-text-stroke:0.15px;">T</span><div class="box" style="left:997px;top:133px;width:17px;height:118px;background:#dde7f1;border-top:1px solid #7fa8d0;border-bottom:1px solid #7fa8d0"></div><span style="position:absolute;white-space:nowrap;left:993px;top:138px;font-size:11px;line-height:15px;letter-spacing:0.12px;color:#222;-webkit-text-stroke:0.2px;">o</span><div class="mask"></div><div class="box" style="left:197px;top:81px;width:800px;height:575px;background:#fff;border-radius:3px;box-shadow:0 3px 18px rgba(0,0,0,.65);overflow:hidden"><div class="box" style="left:0px;top:0px;width:800px;height:37px;background:#dddee0;border-bottom:1px solid #b0b4b8;box-shadow:inset 0 1px 0 #ebedef"></div><span style="position:absolute;white-space:nowrap;left:12.3px;top:8px;font-size:16px;line-height:22px;letter-spacing:-0.25px;color:#050505;-webkit-text-stroke:0.2px;">Logical Router - ENT</span><svg class="box" style="left:768.9px;top:9.1px" width="18" height="18" viewBox="0 0 18 18"><circle cx="9" cy="9" r="7.050" fill="none" stroke="#0a0a0a" stroke-width="1.150"/><text x="9" y="13.100" text-anchor="middle" font-family="Liberation Sans, sans-serif" font-weight="bold" font-size="11.500" fill="#0a0a0a" textLength="5.600" lengthAdjust="spacingAndGlyphs">?</text></svg><div class="box" style="left:0px;top:37px;width:100px;height:423px;background:#f5f5f5"></div><div class="box" style="left:0px;top:172px;width:100px;height:25px;background:#dfe1e4"></div><span style="position:absolute;white-space:nowrap;left:11px;top:43px;font-size:12px;line-height:17px;letter-spacing:-0.22px;color:#5c6878;-webkit-text-stroke:0.2px;">General</span><span style="position:absolute;white-space:nowrap;left:11px;top:70px;font-size:12px;line-height:17px;letter-spacing:-0.08px;color:#5c6878;-webkit-text-stroke:0.2px;">Static</span><span style="position:absolute;white-space:nowrap;left:11px;top:97px;font-size:12px;line-height:17px;letter-spacing:-0.64px;color:#5c6878;-webkit-text-stroke:0.2px;">OSPF</span><span style="position:absolute;white-space:nowrap;left:11px;top:124px;font-size:12px;line-height:17px;letter-spacing:-0.38px;color:#5c6878;-webkit-text-stroke:0.2px;">OSPFv3</span><span style="position:absolute;white-space:nowrap;left:11px;top:151px;font-size:12px;line-height:17px;letter-spacing:-0.29px;color:#5c6878;-webkit-text-stroke:0.2px;">RIPv2</span><span style="position:absolute;white-space:nowrap;left:10.5px;top:177px;font-size:12px;line-height:17px;letter-spacing:-0.65px;color:#111;font-weight:bold;-webkit-text-stroke:0.25px;">BGP</span><span style="position:absolute;white-space:nowrap;left:11px;top:203px;font-size:12px;line-height:17px;letter-spacing:0.2px;color:#5c6878;-webkit-text-stroke:0.2px;">Multicast</span><span style="position:absolute;white-space:nowrap;left:121.5px;top:54px;font-size:12px;line-height:17px;letter-spacing:-0.22px;color:#606a78;-webkit-text-stroke:0.2px;">General</span><span style="position:absolute;white-space:nowrap;left:186.5px;top:54px;font-size:12px;line-height:17px;letter-spacing:-0.48px;color:#1c1e22;font-weight:bold;-webkit-text-stroke:0.25px;">Peer Group</span><span style="position:absolute;white-space:nowrap;left:271.5px;top:54px;font-size:12px;line-height:17px;letter-spacing:0.31px;color:#606a78;-webkit-text-stroke:0.2px;">Network</span><span style="position:absolute;white-space:nowrap;left:341.5px;top:54px;font-size:12px;line-height:17px;letter-spacing:0.05px;color:#606a78;-webkit-text-stroke:0.2px;">Redistribution</span><span style="position:absolute;white-space:nowrap;left:439.5px;top:54px;font-size:12px;line-height:17px;letter-spacing:-0.18px;color:#606a78;-webkit-text-stroke:0.2px;">Aggregate Route</span><div class="box" style="left:175px;top:55px;width:1px;height:13px;background:#bdbdbd"></div><div class="box" style="left:260px;top:55px;width:1px;height:13px;background:#bdbdbd"></div><div class="box" style="left:330.5px;top:55px;width:1px;height:13px;background:#bdbdbd"></div><div class="box" style="left:428px;top:55px;width:1px;height:13px;background:#bdbdbd"></div><div class="box" style="left:110px;top:76px;width:680px;height:1px;background:#c4c4c4"></div><div class="box" style="left:175px;top:73.8px;width:83px;height:2.4px;background:#3f7fc0;border-radius:2px 2px 0 0"></div><div class="box" style="left:110px;top:85px;width:680px;height:150px;border:1px solid #cfcfcf;background:#fff"></div><div class="box" style="left:111px;top:86px;width:678px;height:25px;background:#fff"></div><svg class="box" style="left:113.5px;top:89.5px" width="17" height="17" viewBox="0 0 17 17" fill="none"><circle cx="6.500" cy="6.500" r="5.900" stroke="#4a4f56" stroke-width="1"/><path d="M10.800 10.800l5.200 4.800" stroke="#4a4f56" stroke-width="1.100" stroke-linecap="round"/></svg><div class="box" style="left:132px;top:87.5px;width:611px;height:21px;border:1px solid #c4c4c4;border-radius:11px;background:#fbfbfb"></div><span style="position:absolute;white-space:nowrap;left:703.5px;top:91px;font-size:11px;line-height:15px;letter-spacing:0.11px;color:#222;-webkit-text-stroke:0.2px;">1 item</span><svg class="box" style="left:748px;top:93px" width="15" height="13" viewBox="0 0 15 13" fill="none"><path d="M0.500 6.500h13.500M8.200 0.700l5.800 5.800-5.800 5.800" stroke="#333" stroke-width="0.950" stroke-linecap="round" stroke-linejoin="round"/></svg><svg class="box" style="left:770px;top:92.5px" width="13" height="13" viewBox="0 0 13 13" fill="none"><path d="M0.800 0.800l11.400 11.400M12.200 0.800L0.800 12.200" stroke="#333" stroke-width="0.950" stroke-linecap="round"/></svg><div class="box" style="left:111px;top:110px;width:678px;height:52px;background:#e3e6e6;border-top:1px solid #cfcfcf;border-bottom:1px solid #c4c4c4"></div><div class="box" style="left:136px;top:111px;width:1px;height:51px;background:#c4c4c4"></div><span style="position:absolute;white-space:nowrap;left:142px;top:143px;font-size:9.5px;line-height:13px;letter-spacing:0.95px;color:#3c3c3c;font-weight:bold;-webkit-text-stroke:0.15px;">NAME</span><div class="box" style="left:188px;top:111px;width:1px;height:51px;background:#c4c4c4"></div><span style="position:absolute;white-space:nowrap;left:194px;top:143px;font-size:9.5px;line-height:13px;letter-spacing:0.35px;color:#3c3c3c;font-weight:bold;-webkit-text-stroke:0.15px;">ENABLE</span><div class="box" style="left:240px;top:111px;width:1px;height:51px;background:#c4c4c4"></div><span style="position:absolute;white-space:nowrap;left:246px;top:143px;font-size:9.5px;line-height:13px;letter-spacing:0.45px;color:#3c3c3c;font-weight:bold;-webkit-text-stroke:0.15px;">TYPE</span><div class="box" style="left:292px;top:111px;width:1px;height:51px;background:#c4c4c4"></div><span style="position:absolute;white-space:nowrap;left:298px;top:116px;font-size:9.5px;line-height:13px;letter-spacing:0.88px;color:#3c3c3c;font-weight:bold;-webkit-text-stroke:0.15px;">IPV4</span><span style="position:absolute;white-space:nowrap;left:298px;top:129px;font-size:9.5px;line-height:13px;letter-spacing:0.36px;color:#3c3c3c;font-weight:bold;-webkit-text-stroke:0.15px;">ADDR…</span><span style="position:absolute;white-space:nowrap;left:298px;top:143px;font-size:9.5px;line-height:13px;letter-spacing:0.76px;color:#3c3c3c;font-weight:bold;-webkit-text-stroke:0.15px;">FAMILY</span><div class="box" style="left:344px;top:111px;width:1px;height:51px;background:#c4c4c4"></div><span style="position:absolute;white-space:nowrap;left:350px;top:116px;font-size:9.5px;line-height:13px;letter-spacing:0.88px;color:#3c3c3c;font-weight:bold;-webkit-text-stroke:0.15px;">IPV6</span><span style="position:absolute;white-space:nowrap;left:350px;top:129px;font-size:9.5px;line-height:13px;letter-spacing:0.36px;color:#3c3c3c;font-weight:bold;-webkit-text-stroke:0.15px;">ADDR…</span><span style="position:absolute;white-space:nowrap;left:350px;top:143px;font-size:9.5px;line-height:13px;letter-spacing:0.76px;color:#3c3c3c;font-weight:bold;-webkit-text-stroke:0.15px;">FAMILY</span><div class="box" style="left:396px;top:111px;width:1px;height:51px;background:#c4c4c4"></div><span style="position:absolute;white-space:nowrap;left:402px;top:116px;font-size:9.5px;line-height:13px;letter-spacing:0.88px;color:#3c3c3c;font-weight:bold;-webkit-text-stroke:0.15px;">IPV4</span><span style="position:absolute;white-space:nowrap;left:402px;top:129px;font-size:9.5px;line-height:13px;letter-spacing:0.11px;color:#3c3c3c;font-weight:bold;-webkit-text-stroke:0.15px;">FILTER…</span><span style="position:absolute;white-space:nowrap;left:402px;top:143px;font-size:9.5px;line-height:13px;letter-spacing:0.28px;color:#3c3c3c;font-weight:bold;-webkit-text-stroke:0.15px;">PROFI…</span><div class="box" style="left:448px;top:111px;width:1px;height:51px;background:#c4c4c4"></div><span style="position:absolute;white-space:nowrap;left:454px;top:116px;font-size:9.5px;line-height:13px;letter-spacing:0.88px;color:#3c3c3c;font-weight:bold;-webkit-text-stroke:0.15px;">IPV6</span><span style="position:absolute;white-space:nowrap;left:454px;top:129px;font-size:9.5px;line-height:13px;letter-spacing:0.11px;color:#3c3c3c;font-weight:bold;-webkit-text-stroke:0.15px;">FILTER…</span><span style="position:absolute;white-space:nowrap;left:454px;top:143px;font-size:9.5px;line-height:13px;letter-spacing:0.28px;color:#3c3c3c;font-weight:bold;-webkit-text-stroke:0.15px;">PROFI…</span><div class="box" style="left:500px;top:111px;width:1px;height:51px;background:#c4c4c4"></div><span style="position:absolute;white-space:nowrap;left:506px;top:129px;font-size:9.5px;line-height:13px;letter-spacing:0.88px;color:#3c3c3c;font-weight:bold;-webkit-text-stroke:0.15px;">AUTH</span><span style="position:absolute;white-space:nowrap;left:506px;top:143px;font-size:9.5px;line-height:13px;letter-spacing:0.28px;color:#3c3c3c;font-weight:bold;-webkit-text-stroke:0.15px;">PROFI…</span><div class="box" style="left:552px;top:111px;width:1px;height:51px;background:#c4c4c4"></div><span style="position:absolute;white-space:nowrap;left:558px;top:129px;font-size:9.5px;line-height:13px;letter-spacing:0.75px;color:#3c3c3c;font-weight:bold;-webkit-text-stroke:0.15px;">TIMER</span><span style="position:absolute;white-space:nowrap;left:558px;top:143px;font-size:9.5px;line-height:13px;letter-spacing:0.28px;color:#3c3c3c;font-weight:bold;-webkit-text-stroke:0.15px;">PROFI…</span><div class="box" style="left:604px;top:111px;width:1px;height:51px;background:#c4c4c4"></div><span style="position:absolute;white-space:nowrap;left:610px;top:129px;font-size:9.5px;line-height:13px;letter-spacing:0.91px;color:#3c3c3c;font-weight:bold;-webkit-text-stroke:0.15px;">MULTI</span><span style="position:absolute;white-space:nowrap;left:610px;top:143px;font-size:9.5px;line-height:13px;letter-spacing:0.95px;color:#3c3c3c;font-weight:bold;-webkit-text-stroke:0.15px;">HOP</span><div class="box" style="left:656px;top:111px;width:1px;height:51px;background:#c4c4c4"></div><span style="position:absolute;white-space:nowrap;left:662px;top:129px;font-size:9.5px;line-height:13px;letter-spacing:0.34px;color:#3c3c3c;font-weight:bold;-webkit-text-stroke:0.15px;">DAMP…</span><span style="position:absolute;white-space:nowrap;left:662px;top:143px;font-size:9.5px;line-height:13px;letter-spacing:0.28px;color:#3c3c3c;font-weight:bold;-webkit-text-stroke:0.15px;">PROFI…</span><div class="box" style="left:708px;top:111px;width:1px;height:51px;background:#c4c4c4"></div><span style="position:absolute;white-space:nowrap;left:714px;top:143px;font-size:9.5px;line-height:13px;letter-spacing:0.11px;color:#3c3c3c;font-weight:bold;-webkit-text-stroke:0.15px;">PEER</span><div class="box" style="left:784px;top:111px;width:1px;height:51px;background:#c4c4c4"></div><div class="cb" style="left:117px;top:141px"></div><div class="box" style="left:111px;top:162px;width:673px;height:22.5px;background:#dbe6f1;border-top:1px solid #6fa0d0;border-bottom:1px solid #6fa0d0"></div><div class="box" style="left:136px;top:163px;width:1px;height:20px;background:#c3cfdb"></div><div class="box" style="left:188px;top:163px;width:1px;height:20px;background:#c3cfdb"></div><div class="box" style="left:240px;top:163px;width:1px;height:20px;background:#c3cfdb"></div><div class="box" style="left:292px;top:163px;width:1px;height:20px;background:#c3cfdb"></div><div class="box" style="left:344px;top:163px;width:1px;height:20px;background:#c3cfdb"></div><div class="box" style="left:396px;top:163px;width:1px;height:20px;background:#c3cfdb"></div><div class="box" style="left:448px;top:163px;width:1px;height:20px;background:#c3cfdb"></div><div class="box" style="left:500px;top:163px;width:1px;height:20px;background:#c3cfdb"></div><div class="box" style="left:552px;top:163px;width:1px;height:20px;background:#c3cfdb"></div><div class="box" style="left:604px;top:163px;width:1px;height:20px;background:#c3cfdb"></div><div class="box" style="left:656px;top:163px;width:1px;height:20px;background:#c3cfdb"></div><div class="box" style="left:708px;top:163px;width:1px;height:20px;background:#c3cfdb"></div><div class="cb" style="left:117px;top:166px;background:#3f80be;border:0"><svg width="13" height="13" viewBox="0 0 13 13" fill="none"><path d="M2.300 6.900l3.200 3 5.800-6.900" stroke="#fff" stroke-width="1.05" stroke-linecap="round" stroke-linejoin="round"/></svg></div><div class="cb" style="left:195px;top:167px;width:14px;height:14px;background:#a9c9ec;border:0"><svg width="14" height="14" viewBox="0 0 13 13" fill="none"><path d="M2.300 6.900l3.200 3 5.800-6.900" stroke="#fff" stroke-width="1.1" stroke-linecap="round" stroke-linejoin="round"/></svg></div><span style="position:absolute;white-space:nowrap;left:142px;top:167px;font-size:11px;line-height:15px;letter-spacing:-0.74px;color:#111;-webkit-text-stroke:0.2px;">ISPs</span><span style="position:absolute;white-space:nowrap;left:246px;top:167px;font-size:11px;line-height:15px;letter-spacing:-0.15px;color:#111;-webkit-text-stroke:0.2px;">ebgp</span><span style="position:absolute;white-space:nowrap;left:298px;top:167px;font-size:11px;line-height:15px;letter-spacing:0.12px;color:#111;-webkit-text-stroke:0.2px;">default</span><span style="position:absolute;white-space:nowrap;left:610px;top:167px;font-size:11px;line-height:15px;letter-spacing:0.26px;color:#111;-webkit-text-stroke:0.2px;">0</span><span style="position:absolute;white-space:nowrap;left:714px;top:167px;font-size:11px;line-height:15px;letter-spacing:0.08px;color:#111;-webkit-text-stroke:0.2px;">2 enabled/ 2</span></div><div class="mask"></div><div class="box" style="left:309px;top:273px;width:700px;height:600px;background:#fff;border-radius:4px;box-shadow:0 3px 18px rgba(0,0,0,.65);overflow:hidden"><div class="box" style="left:0px;top:0px;width:700px;height:37px;background:#dddee0;border-bottom:1px solid #b0b4b8;box-shadow:inset 0 1px 0 #ebedef"></div><span style="position:absolute;white-space:nowrap;left:12.3px;top:8px;font-size:16px;line-height:22px;letter-spacing:-0.34px;color:#050505;-webkit-text-stroke:0.2px;">BGP - Peer Group</span><svg class="box" style="left:669.1px;top:9.1px" width="18" height="18" viewBox="0 0 18 18"><circle cx="9" cy="9" r="7.050" fill="none" stroke="#0a0a0a" stroke-width="1.150"/><text x="9" y="13.100" text-anchor="middle" font-family="Liberation Sans, sans-serif" font-weight="bold" font-size="11.500" fill="#0a0a0a" textLength="5.600" lengthAdjust="spacingAndGlyphs">?</text></svg><div class="fs" style="left:12px;top:54.5px;width:335px;height:227px"></div><div class="box" style="left:19px;top:49px;width:66px;height:12px;background:#fff"></div><span style="position:absolute;white-space:nowrap;left:24.3px;top:48px;font-size:11px;line-height:15px;letter-spacing:-0.44px;color:#5a6a7b;font-weight:bold;-webkit-text-stroke:0.25px;">Peer Group</span><span style="position:absolute;white-space:nowrap;left:99.9434px;top:73px;font-size:11px;line-height:15px;letter-spacing:-0.2px;color:#6a6a6a;-webkit-text-stroke:0.3px;">Name</span><div class="inp" style="left:134px;top:70px;width:206px"></div><span style="position:absolute;white-space:nowrap;left:139px;top:73px;font-size:11px;line-height:15px;letter-spacing:-0.74px;color:#111;-webkit-text-stroke:0.2px;">ISPs</span><div class="cb" style="left:135px;top:97px;width:14px;height:14px;background:#4a90e0;border:0"><svg width="14" height="14" viewBox="0 0 13 13" fill="none"><path d="M2.300 6.900l3.200 3 5.800-6.900" stroke="#fff" stroke-width="1.1" stroke-linecap="round" stroke-linejoin="round"/></svg></div><span style="position:absolute;white-space:nowrap;left:153px;top:97px;font-size:11px;line-height:15px;letter-spacing:-0.31px;color:#333;-webkit-text-stroke:0.2px;">Enable</span><span style="position:absolute;white-space:nowrap;left:105.311px;top:119px;font-size:11px;line-height:15px;letter-spacing:-0.16px;color:#6a6a6a;-webkit-text-stroke:0.3px;">Type</span><div class="box" style="left:136px;top:120px;width:14px;height:14px;border:1px solid #a6a6a6;border-radius:50%;background:#fff;box-shadow:inset 0 1px 1px rgba(0,0,0,.08)"></div><span style="position:absolute;white-space:nowrap;left:154px;top:121px;font-size:11px;line-height:15px;letter-spacing:-0.36px;color:#444;-webkit-text-stroke:0.2px;">IBGP</span><div class="box" style="left:193px;top:120px;width:14px;height:14px;border-radius:50%;background:#4a8fe2"><div class="box" style="left:4.5px;top:4.5px;width:5px;height:5px;border-radius:50%;background:#fff"></div></div><span style="position:absolute;white-space:nowrap;left:211px;top:121px;font-size:11px;line-height:15px;letter-spacing:-0.62px;color:#444;-webkit-text-stroke:0.2px;">EBGP</span><span style="position:absolute;white-space:nowrap;left:31.873px;top:146px;font-size:11px;line-height:15px;letter-spacing:-0.19px;color:#6a6a6a;-webkit-text-stroke:0.3px;">IPv4 Address Family</span><div class="inp" style="left:134px;top:143px;width:200px"></div><span style="position:absolute;white-space:nowrap;left:139px;top:146px;font-size:11px;line-height:15px;letter-spacing:0.12px;color:#111;-webkit-text-stroke:0.2px;">default</span><div class="box" style="left:317px;top:151px"><svg width="9.2" height="5.6" viewBox="0 0 9.2 5.6" fill="none"><path d="M0.600 0.700L4.6 4.8l4-4.1" stroke="#4a4f57" stroke-width="1" stroke-linecap="round" stroke-linejoin="round"/></svg></div><span style="position:absolute;white-space:nowrap;left:31.873px;top:170px;font-size:11px;line-height:15px;letter-spacing:-0.19px;color:#6a6a6a;-webkit-text-stroke:0.3px;">IPv6 Address Family</span><div class="inp" style="left:134px;top:167px;width:200px"></div><span style="position:absolute;white-space:nowrap;left:139px;top:170px;font-size:11px;line-height:15px;letter-spacing:0.03px;color:#111;-webkit-text-stroke:0.2px;">None</span><div class="box" style="left:317px;top:175px"><svg width="9.2" height="5.6" viewBox="0 0 9.2 5.6" fill="none"><path d="M0.600 0.700L4.6 4.8l4-4.1" stroke="#4a4f57" stroke-width="1" stroke-linecap="round" stroke-linejoin="round"/></svg></div><span style="position:absolute;white-space:nowrap;left:30.3652px;top:194px;font-size:11px;line-height:15px;letter-spacing:-0.01px;color:#6a6a6a;-webkit-text-stroke:0.3px;">IPv4 Filtering Profile</span><div class="inp" style="left:134px;top:191px;width:200px"></div><span style="position:absolute;white-space:nowrap;left:139px;top:194px;font-size:11px;line-height:15px;letter-spacing:-0.13px;color:#111;-webkit-text-stroke:0.2px;">My_BGP_Filtering_Profile</span><div class="box" style="left:317px;top:199px"><svg width="9.2" height="5.6" viewBox="0 0 9.2 5.6" fill="none"><path d="M0.600 0.700L4.6 4.8l4-4.1" stroke="#4a4f57" stroke-width="1" stroke-linecap="round" stroke-linejoin="round"/></svg></div><span style="position:absolute;white-space:nowrap;left:30.3652px;top:218px;font-size:11px;line-height:15px;letter-spacing:-0.01px;color:#6a6a6a;-webkit-text-stroke:0.3px;">IPv6 Filtering Profile</span><div class="inp" style="left:134px;top:215px;width:200px"></div><span style="position:absolute;white-space:nowrap;left:139px;top:218px;font-size:11px;line-height:15px;letter-spacing:0.03px;color:#111;-webkit-text-stroke:0.2px;">None</span><div class="box" style="left:317px;top:223px"><svg width="9.2" height="5.6" viewBox="0 0 9.2 5.6" fill="none"><path d="M0.600 0.700L4.6 4.8l4-4.1" stroke="#4a4f57" stroke-width="1" stroke-linecap="round" stroke-linejoin="round"/></svg></div><div class="fs" style="left:352px;top:54.5px;width:335px;height:118.5px"></div><div class="box" style="left:360px;top:49px;width:106px;height:12px;background:#fff"></div><span style="position:absolute;white-space:nowrap;left:364.3px;top:48px;font-size:11px;line-height:15px;letter-spacing:-0.35px;color:#5a6a7b;font-weight:bold;-webkit-text-stroke:0.25px;">Connection Options</span><span style="position:absolute;white-space:nowrap;left:401.062px;top:73px;font-size:11px;line-height:15px;letter-spacing:0.05px;color:#6a6a6a;-webkit-text-stroke:0.3px;">Auth Profile</span><div class="inp" style="left:464px;top:70px;width:216px"></div><span style="position:absolute;white-space:nowrap;left:469px;top:73px;font-size:11px;line-height:15px;letter-spacing:0.03px;color:#111;-webkit-text-stroke:0.2px;">None</span><div class="box" style="left:663px;top:78px"><svg width="9.2" height="5.6" viewBox="0 0 9.2 5.6" fill="none"><path d="M0.600 0.700L4.6 4.8l4-4.1" stroke="#4a4f57" stroke-width="1" stroke-linecap="round" stroke-linejoin="round"/></svg></div><span style="position:absolute;white-space:nowrap;left:396.855px;top:97px;font-size:11px;line-height:15px;letter-spacing:-0.02px;color:#6a6a6a;-webkit-text-stroke:0.3px;">Timer Profile</span><div class="inp" style="left:464px;top:94px;width:216px"></div><span style="position:absolute;white-space:nowrap;left:469px;top:97px;font-size:11px;line-height:15px;letter-spacing:0.03px;color:#111;-webkit-text-stroke:0.2px;">None</span><div class="box" style="left:663px;top:102px"><svg width="9.2" height="5.6" viewBox="0 0 9.2 5.6" fill="none"><path d="M0.600 0.700L4.6 4.8l4-4.1" stroke="#4a4f57" stroke-width="1" stroke-linecap="round" stroke-linejoin="round"/></svg></div><span style="position:absolute;white-space:nowrap;left:409.436px;top:121px;font-size:11px;line-height:15px;letter-spacing:0.29px;color:#6a6a6a;-webkit-text-stroke:0.3px;">Multi Hop</span><div class="inp" style="left:464px;top:118px;width:216px"></div><span style="position:absolute;white-space:nowrap;left:469px;top:121px;font-size:11px;line-height:15px;letter-spacing:0.26px;color:#111;-webkit-text-stroke:0.2px;">0</span><span style="position:absolute;white-space:nowrap;left:369.238px;top:145px;font-size:11px;line-height:15px;letter-spacing:-0.07px;color:#6a6a6a;-webkit-text-stroke:0.3px;">Dampening Profile</span><div class="inp" style="left:464px;top:142px;width:216px"></div><span style="position:absolute;white-space:nowrap;left:469px;top:145px;font-size:11px;line-height:15px;letter-spacing:0.03px;color:#111;-webkit-text-stroke:0.2px;">None</span><div class="box" style="left:663px;top:150px"><svg width="9.2" height="5.6" viewBox="0 0 9.2 5.6" fill="none"><path d="M0.600 0.700L4.6 4.8l4-4.1" stroke="#4a4f57" stroke-width="1" stroke-linecap="round" stroke-linejoin="round"/></svg></div><div class="box" style="left:10px;top:286px;width:680px;height:240px;border:1px solid #cfcfcf;background:#fff"></div><svg class="box" style="left:14px;top:291px" width="17" height="17" viewBox="0 0 17 17" fill="none"><circle cx="6.500" cy="6.500" r="5.900" stroke="#4a4f56" stroke-width="1"/><path d="M10.800 10.800l5.200 4.800" stroke="#4a4f56" stroke-width="1.100" stroke-linecap="round"/></svg><div class="box" style="left:32px;top:289px;width:612px;height:19.5px;border:1px solid #c4c4c4;border-radius:10px;background:#fff"></div><span style="position:absolute;white-space:nowrap;left:599px;top:292px;font-size:11px;line-height:15px;letter-spacing:-0.01px;color:#222;-webkit-text-stroke:0.2px;">2 items</span><svg class="box" style="left:647.5px;top:294.5px" width="15" height="13" viewBox="0 0 15 13" fill="none"><path d="M0.500 6.500h13.500M8.200 0.700l5.800 5.800-5.800 5.800" stroke="#333" stroke-width="0.950" stroke-linecap="round" stroke-linejoin="round"/></svg><svg class="box" style="left:669.7px;top:294px" width="13" height="13" viewBox="0 0 13 13" fill="none"><path d="M0.800 0.800l11.400 11.400M12.200 0.800L0.800 12.200" stroke="#333" stroke-width="0.950" stroke-linecap="round"/></svg><div class="box" style="left:11px;top:311px;width:678px;height:25px;background:#eeefef;border-top:1px solid #d2d2d2;border-bottom:1px solid #c4c4c4"></div><div class="box" style="left:36px;top:312px;width:1px;height:23px;background:#c4c4c4"></div><span style="position:absolute;white-space:nowrap;left:42.3px;top:317px;font-size:9.5px;line-height:13px;letter-spacing:0.11px;color:#3c3c3c;font-weight:bold;-webkit-text-stroke:0.15px;">PEER</span><div class="box" style="left:144px;top:312px;width:1px;height:23px;background:#c4c4c4"></div><span style="position:absolute;white-space:nowrap;left:150.3px;top:317px;font-size:9.5px;line-height:13px;letter-spacing:0.35px;color:#3c3c3c;font-weight:bold;-webkit-text-stroke:0.15px;">ENABLE</span><div class="box" style="left:252px;top:312px;width:1px;height:23px;background:#c4c4c4"></div><span style="position:absolute;white-space:nowrap;left:258.3px;top:317px;font-size:9.5px;line-height:13px;letter-spacing:0.19px;color:#3c3c3c;font-weight:bold;-webkit-text-stroke:0.15px;">PEER AS</span><div class="box" style="left:360px;top:312px;width:1px;height:23px;background:#c4c4c4"></div><span style="position:absolute;white-space:nowrap;left:366.3px;top:317px;font-size:9.5px;line-height:13px;letter-spacing:0.78px;color:#3c3c3c;font-weight:bold;-webkit-text-stroke:0.15px;">INHERIT</span><div class="box" style="left:468px;top:312px;width:1px;height:23px;background:#c4c4c4"></div><span style="position:absolute;white-space:nowrap;left:474.3px;top:317px;font-size:9.5px;line-height:13px;letter-spacing:0.36px;color:#3c3c3c;font-weight:bold;-webkit-text-stroke:0.15px;">LOCAL ADDRESS</span><div class="box" style="left:576px;top:312px;width:1px;height:23px;background:#c4c4c4"></div><span style="position:absolute;white-space:nowrap;left:582.3px;top:317px;font-size:9.5px;line-height:13px;letter-spacing:0.29px;color:#3c3c3c;font-weight:bold;-webkit-text-stroke:0.15px;">PEER ADDRESS</span><div class="box" style="left:684px;top:312px;width:1px;height:23px;background:#c4c4c4"></div><div class="cb" style="left:17px;top:315.3px"></div><div class="box" style="left:11px;top:336px;width:673.5px;height:22px;background:#fff"></div><div class="box" style="left:36px;top:337px;width:1px;height:21px;background:#e2e2e2"></div><div class="box" style="left:144px;top:337px;width:1px;height:21px;background:#e2e2e2"></div><div class="box" style="left:252px;top:337px;width:1px;height:21px;background:#e2e2e2"></div><div class="box" style="left:360px;top:337px;width:1px;height:21px;background:#e2e2e2"></div><div class="box" style="left:468px;top:337px;width:1px;height:21px;background:#e2e2e2"></div><div class="box" style="left:576px;top:337px;width:1px;height:21px;background:#e2e2e2"></div><div class="box" style="left:684px;top:337px;width:1px;height:21px;background:#e2e2e2"></div><div class="cb" style="left:17px;top:340.2px"></div><div class="cb" style="left:151px;top:341px;width:14px;height:14px;background:#a9c9ec;border:0"><svg width="14" height="14" viewBox="0 0 13 13" fill="none"><path d="M2.300 6.900l3.200 3 5.800-6.900" stroke="#fff" stroke-width="1.1" stroke-linecap="round" stroke-linejoin="round"/></svg></div><span style="position:absolute;white-space:nowrap;left:42px;top:341px;font-size:11px;line-height:15px;letter-spacing:-0.45px;color:#111;-webkit-text-stroke:0.2px;">ISP1</span><span style="position:absolute;white-space:nowrap;left:258px;top:341px;font-size:11px;line-height:15px;letter-spacing:0.26px;color:#111;-webkit-text-stroke:0.2px;">64512</span><span style="position:absolute;white-space:nowrap;left:366px;top:341px;font-size:11px;line-height:15px;letter-spacing:-0.34px;color:#111;-webkit-text-stroke:0.2px;">yes</span><span style="position:absolute;white-space:nowrap;left:474px;top:341px;font-size:11px;line-height:15px;letter-spacing:0.22px;color:#111;-webkit-text-stroke:0.2px;">172.16.1.2/24</span><span style="position:absolute;white-space:nowrap;left:582px;top:341px;font-size:11px;line-height:15px;letter-spacing:0.05px;color:#111;-webkit-text-stroke:0.2px;">172.16.1.1</span><div class="box" style="left:11px;top:358px;width:673.5px;height:23.5px;background:#f0f5f8"></div><div class="box" style="left:36px;top:360px;width:1px;height:21px;background:#e2e2e2"></div><div class="box" style="left:144px;top:360px;width:1px;height:21px;background:#e2e2e2"></div><div class="box" style="left:252px;top:360px;width:1px;height:21px;background:#e2e2e2"></div><div class="box" style="left:360px;top:360px;width:1px;height:21px;background:#e2e2e2"></div><div class="box" style="left:468px;top:360px;width:1px;height:21px;background:#e2e2e2"></div><div class="box" style="left:576px;top:360px;width:1px;height:21px;background:#e2e2e2"></div><div class="box" style="left:684px;top:360px;width:1px;height:21px;background:#e2e2e2"></div><div class="cb" style="left:17px;top:363.2px"></div><div class="cb" style="left:151px;top:364px;width:14px;height:14px;background:#a9c9ec;border:0"><svg width="14" height="14" viewBox="0 0 13 13" fill="none"><path d="M2.300 6.900l3.200 3 5.800-6.900" stroke="#fff" stroke-width="1.1" stroke-linecap="round" stroke-linejoin="round"/></svg></div><span style="position:absolute;white-space:nowrap;left:42px;top:364px;font-size:11px;line-height:15px;letter-spacing:-0.45px;color:#111;-webkit-text-stroke:0.2px;">ISP2</span><span style="position:absolute;white-space:nowrap;left:258px;top:364px;font-size:11px;line-height:15px;letter-spacing:0.26px;color:#111;-webkit-text-stroke:0.2px;">64513</span><span style="position:absolute;white-space:nowrap;left:366px;top:364px;font-size:11px;line-height:15px;letter-spacing:-0.34px;color:#111;-webkit-text-stroke:0.2px;">yes</span><span style="position:absolute;white-space:nowrap;left:474px;top:364px;font-size:11px;line-height:15px;letter-spacing:0.22px;color:#111;-webkit-text-stroke:0.2px;">172.16.2.2/24</span><span style="position:absolute;white-space:nowrap;left:582px;top:364px;font-size:11px;line-height:15px;letter-spacing:0.05px;color:#111;-webkit-text-stroke:0.2px;">172.16.2.1</span><div class="box" style="left:11px;top:498px;width:678px;height:27px;background:#f5f7f7;border-top:1px solid #cfd2d4"></div><svg class="box" style="left:17px;top:504.79999999999995px" width="15" height="15" viewBox="0 0 15 15" fill="none"><circle cx="7.500" cy="7.500" r="6.900" stroke="#3f6fa3" stroke-width="1.050"/><path d="M7.500 4v7M4 7.500h7" stroke="#3f6fa3" stroke-width="1.050"/></svg><span style="position:absolute;white-space:nowrap;left:35.2px;top:505px;font-size:12px;line-height:17px;letter-spacing:0.03px;color:#222;-webkit-text-stroke:0.3px;">Add</span><svg class="box" style="left:69.80000000000001px;top:504.79999999999995px" width="15" height="15" viewBox="0 0 15 15" fill="none"><circle cx="7.500" cy="7.500" r="6.900" stroke="#e6b4b4" stroke-width="1.050"/><path d="M2.800 7.500h9.400" stroke="#e6b4b4" stroke-width="1.050"/></svg><span style="position:absolute;white-space:nowrap;left:88px;top:505px;font-size:12px;line-height:17px;letter-spacing:0.07px;color:#adadad;-webkit-text-stroke:0.2px;">Delete</span><div class="box" style="left:534px;top:556px;width:75px;height:28px;background:#4f9be0;border-radius:14px"></div><span style="position:absolute;white-space:nowrap;left:563.3px;top:563px;font-size:11.5px;line-height:16px;letter-spacing:0.1px;color:#fff;-webkit-text-stroke:0.45px;">OK</span><div class="box" style="left:615px;top:556px;width:75px;height:28px;background:#fff;border:1px solid #c2c5c9;border-radius:14px"></div><span style="position:absolute;white-space:nowrap;left:636.3px;top:564px;font-size:11px;line-height:15px;letter-spacing:-0.29px;color:#2a2d33;-webkit-text-stroke:0.15px;">Cancel</span></div></div></body></html>
